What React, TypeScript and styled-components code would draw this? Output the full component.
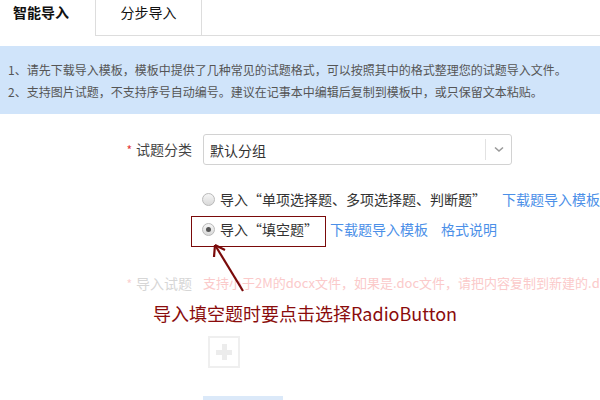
import React from "react";
import styled, { createGlobalStyle } from "styled-components";

const Global = createGlobalStyle`
  html, body { margin: 0; padding: 0; background: #fff; }
  body { font-family: "Noto Sans CJK SC", "Microsoft YaHei", sans-serif; color: #333; }
  * { box-sizing: border-box; }
`;

const Page = styled.div`
  position: relative;
  width: 600px;
  height: 400px;
  overflow: hidden;
`;

const TabBar = styled.div`
  display: flex;
  height: 36px;
`;

const Tab = styled.div<{ $active?: boolean }>`
  width: ${(p) => (p.$active ? "95px" : "107px")};
  height: 36px;
  padding-top: 3px;
  font-size: 14px;
  line-height: 18px;
  font-weight: ${(p) => (p.$active ? 700 : 400)};
  color: #111;
  text-align: ${(p) => (p.$active ? "left" : "center")};
  padding-left: ${(p) => (p.$active ? "13px" : "0")};
  border-bottom: ${(p) => (p.$active ? "none" : "1px solid #ddd")};
  border-left: ${(p) => (p.$active ? "none" : "1px solid #ddd")};
  border-right: ${(p) => (p.$active ? "none" : "1px solid #ddd")};
`;

const TabFill = styled.div`
  flex: 1;
  border-bottom: 1px solid #ddd;
`;

const Info = styled.div`
  margin-top: 10px;
  background: #d0e4fa;
  padding: 13px 8px 11px;
  font-size: 12px;
  line-height: 22px;
  color: #555;
  white-space: nowrap;
`;

const Form = styled.div`
  padding-top: 20px;
  display: flex;
  flex-direction: column;
`;

const Row = styled.div<{ $mt?: number; $h?: number }>`
  display: flex;
  align-items: center;
  margin-top: ${(p) => p.$mt ?? 0}px;
  height: ${(p) => p.$h ?? 30}px;
  white-space: nowrap;
`;

const Label = styled.div<{ $faded?: boolean }>`
  width: 192px;
  text-align: right;
  font-size: 14px;
  line-height: 20px;
  color: ${(p) => (p.$faded ? "#d6d6d6" : "#444")};
  flex-shrink: 0;
`;

const Star = styled.span<{ $faded?: boolean }>`
  color: ${(p) => (p.$faded ? "#fbd0d0" : "#e4393c")};
  margin-right: 4px;
  font-size: 12px;
`;

const Control = styled.div`
  margin-left: 11px;
  display: flex;
  align-items: center;
  position: relative;
  overflow: hidden;
`;

const Select = styled.div`
  width: 309px;
  height: 31px;
  border: 1px solid #d2d2d2;
  border-radius: 3px;
  display: flex;
  align-items: center;
  font-size: 14px;
  color: #333;
`;

const SelectText = styled.div`
  flex: 1;
  padding-left: 6px;
  line-height: 20px;
`;

const SelectArrow = styled.div`
  width: 26px;
  height: 21px;
  border-left: 1px solid #e2e2e2;
  display: flex;
  align-items: center;
  justify-content: center;
`;

const RadioGroup = styled.div`
  margin-top: 19px;
  display: flex;
  flex-direction: column;
  padding-left: 202px;
`;

const RadioRow = styled.div`
  display: flex;
  align-items: center;
  height: 30px;
  white-space: nowrap;
  position: relative;
`;

const RadioCircle = styled.span<{ $checked?: boolean }>`
  width: 13px;
  height: 13px;
  border-radius: 50%;
  border: 1px solid #b9b9b9;
  background: linear-gradient(#f6f6f6, #d9d9d9);
  display: inline-flex;
  align-items: center;
  justify-content: center;
  flex-shrink: 0;
  &::after {
    content: "";
    display: ${(p) => (p.$checked ? "block" : "none")};
    width: 5px;
    height: 5px;
    border-radius: 50%;
    background: #555;
  }
`;

const RadioText = styled.span`
  margin-left: 5px;
  font-size: 14px;
  line-height: 20px;
  color: #333;
`;

const Link = styled.a<{ $ml: number }>`
  margin-left: ${(p) => p.$ml}px;
  font-size: 14px;
  line-height: 20px;
  color: #4b8fe8;
  text-decoration: none;
`;

const Highlight = styled.div`
  position: absolute;
  left: -11px;
  top: 2px;
  width: 135px;
  height: 31px;
  border: 1.5px solid #7a0a0a;
  pointer-events: none;
`;

const Hint = styled.span`
  font-size: 13px;
  line-height: 20px;
  color: #fbcaca;
`;

const Uploader = styled.div`
  margin-top: 38px;
  margin-left: 208px;
  width: 32px;
  height: 32px;
  border: 2px solid #efefef;
  position: relative;
  display: flex;
  align-items: center;
  justify-content: center;
`;

const PlusH = styled.span`
  position: absolute;
  width: 16px;
  height: 5px;
  background: #ececec;
`;

const PlusV = styled.span`
  position: absolute;
  width: 5px;
  height: 16px;
  background: #ececec;
`;

const Submit = styled.div`
  margin-top: 28px;
  margin-left: 203px;
  width: 80px;
  height: 20px;
  background: #dbe9f9;
`;

const Annotation = styled.div`
  position: absolute;
  left: 153px;
  top: 301px;
  font-size: 18px;
  line-height: 24px;
  color: #8a0c0c;
  white-space: nowrap;
`;

const ArrowSvg = styled.svg`
  position: absolute;
  left: 205px;
  top: 240px;
  width: 50px;
  height: 60px;
  overflow: visible;
`;

export default function App() {
  return (
    <Page>
      <Global />
      <TabBar>
        <Tab $active>智能导入</Tab>
        <Tab>分步导入</Tab>
        <TabFill />
      </TabBar>
      <Info>
        <div>1、请先下载导入模板，模板中提供了几种常见的试题格式，可以按照其中的格式整理您的试题导入文件。</div>
        <div>2、支持图片试题，不支持序号自动编号。建议在记事本中编辑后复制到模板中，或只保留文本粘贴。</div>
      </Info>
      <Form>
        <Row $h={31}>
          <Label>
            <Star>*</Star>试题分类
          </Label>
          <Control>
            <Select>
              <SelectText>默认分组</SelectText>
              <SelectArrow>
                <svg width="10" height="7" viewBox="0 0 10 7">
                  <path d="M1 1.5 L5 5 L9 1.5" fill="none" stroke="#9a9a9a" strokeWidth="1.6" />
                </svg>
              </SelectArrow>
            </Select>
          </Control>
        </Row>
        <RadioGroup>
          <RadioRow>
            <RadioCircle />
            <RadioText>导入“单项选择题、多项选择题、判断题”</RadioText>
            <Link $ml={16}>下载题导入模板</Link>
          </RadioRow>
          <RadioRow>
            <RadioCircle $checked />
            <RadioText>导入“填空题”</RadioText>
            <Link $ml={12}>下载题导入模板</Link>
            <Link $ml={13}>格式说明</Link>
            <Highlight />
          </RadioRow>
        </RadioGroup>
        <Row $mt={24}>
          <Label $faded>
            <Star $faded>*</Star>导入试题
          </Label>
          <Control>
            <Hint>支持小于2M的docx文件，如果是.doc文件，请把内容复制到新建的.docx文</Hint>
          </Control>
        </Row>
        <Uploader>
          <PlusH />
          <PlusV />
        </Uploader>
        <Submit />
      </Form>
      <ArrowSvg viewBox="0 0 50 60">
        <line x1="38" y1="51" x2="10" y2="5" stroke="#7a0a0a" strokeWidth="2.2" />
        <path d="M10 5 L9 17 M10 5 L20 10" stroke="#7a0a0a" strokeWidth="2.2" fill="none" />
      </ArrowSvg>
      <Annotation>导入填空题时要点击选择RadioButton</Annotation>
    </Page>
  );
}
